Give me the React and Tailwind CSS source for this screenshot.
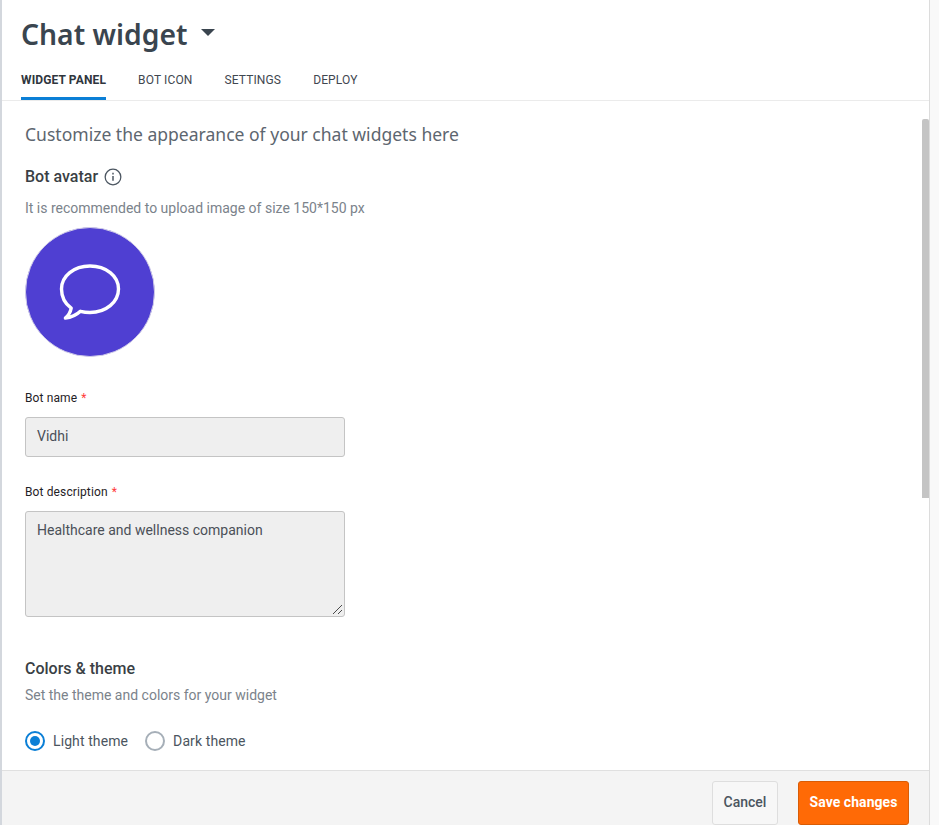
import React from "react";

const roboto = "font-['Roboto',sans-serif]";

function Label({ children }) {
  return (
    <div className="flex h-4 items-center text-[12px] font-normal leading-4 tracking-[0.12px] text-[#1f2226]">
      {children}
      <span className="ml-1 text-[#ff3b3b]">*</span>
    </div>
  );
}

function Radio({ checked, label }) {
  return (
    <div className="flex items-center">
      <span className={"flex h-5 w-5 items-center justify-center rounded-full border-2 bg-white " + (checked ? "border-[#0b7fd6]" : "border-[#a6afb8]")}>
        {checked && <span className="h-2.5 w-2.5 rounded-full bg-[#0b7fd6]" />}
      </span>
      <span className="ml-2 text-[14px] leading-5 tracking-[0.1px] text-[#4b5560]">{label}</span>
    </div>
  );
}

export default function App() {
  return (
    <div className={"relative flex h-[825px] w-[939px] overflow-hidden bg-[#f9f9f9] " + roboto}>
      <div className="flex h-full w-[930px] flex-col border-l-2 border-r border-l-[#d3d7dd] border-r-[#dcdcdc] bg-white">
        <header className="h-[101px] shrink-0 border-b border-[#ebebeb] pl-[19px]">
          <div className="flex h-[69px] items-center pb-[2px]">
            <h1 className="font-['Noto_Sans',sans-serif] text-[28.3px] font-semibold leading-10 text-[#3a454f]">Chat widget</h1>
            <svg className="ml-[14px] mt-[-3px]" width="14" height="7" viewBox="0 0 14 7"><path d="M0 0h14L7 7z" fill="#3a454f" /></svg>
          </div>
          <nav className="flex h-[31px] gap-8 text-[12px] leading-5 tracking-[0.13px] text-[#3f4750]">
            <div className="h-[31px] border-b-[3px] border-[#0b7fd6] pt-[1px] font-bold text-[#2f363d]">WIDGET PANEL</div>
            <div className="pt-[1px]">BOT ICON</div>
            <div className="pt-[1px]">SETTINGS</div>
            <div className="pt-[1px]">DEPLOY</div>
          </nav>
        </header>

        <main className="min-h-0 flex-1 overflow-hidden pl-[23px]">
          <h2 className="mt-[19px] font-['Noto_Sans',sans-serif] text-[17.55px] leading-[28px] text-[#5d666f]">Customize the appearance of your chat widgets here</h2>
          <div className="mt-[19px] flex h-5 items-center">
            <span className="text-[16px] font-medium leading-5 text-[#3a3f45]">Bot avatar</span>
            <svg className="ml-[6px]" width="18" height="18" viewBox="0 0 17 17" fill="none" stroke="#4b5560" strokeWidth="1.2">
              <circle cx="8.5" cy="8.5" r="7.4" />
              <path d="M8.5 7.5v4.5" strokeWidth="1.4" />
              <path d="M8.5 4.6v1.5" strokeWidth="1.4" />
            </svg>
          </div>
          <p className="mt-[11px] text-[14px] leading-5 text-[#7b838b]">It is recommended to upload image of size 150*150 px</p>
          <div className="mt-[9px] flex h-[130px] w-[130px] items-center justify-center rounded-full border border-[#cfcbe8] bg-[#4f3fd2]">
            <svg width="64" height="58" viewBox="0 0 64 58" fill="none">
              <path d="M32 3C48 3 60.5 13 60.5 26S48 49.5 32 49.5c-3.6 0-6.8-.5-9.6-1.2-3.6 3.4-9 6.2-15 6.7 3-2.6 5-5.6 5.8-9.8C7.5 41 3.5 34 3.5 26 3.5 13 16 3 32 3Z" stroke="#fff" strokeWidth="3.4" strokeLinejoin="round" />
            </svg>
          </div>

          <div className="mt-[33px]"><Label>Bot name</Label></div>
          <div className="mt-[11px] flex h-10 w-80 items-center rounded-[3px] border border-[#c4c4c4] bg-[#efefef] px-[11px] pb-[2px] text-[14px] text-[#4b5058]">Vidhi</div>

          <div className="mt-[27px]"><Label>Bot description</Label></div>
          <div className="relative mt-[11px] h-[106px] w-80 rounded-[3px] border border-[#c4c4c4] bg-[#efefef] px-[11px] pt-2 text-[14px] leading-5 text-[#4b5058]">
            Healthcare and wellness companion
            <svg className="absolute bottom-[1px] right-[1px]" width="12" height="12" viewBox="0 0 12 12" stroke="#4a4a4a" strokeWidth="1" fill="none">
              <path d="M2 11 11 2" />
              <path d="M7 11l4-4" />
            </svg>
          </div>

          <h3 className="mt-[42px] text-[16px] font-medium leading-5 text-[#3a3f45]">Colors &amp; theme</h3>
          <p className="mt-[6px] text-[14px] leading-5 text-[#7b838b]">Set the theme and colors for your widget</p>
          <div className="mt-[26px] flex gap-[17px]">
            <Radio checked label="Light theme" />
            <Radio label="Dark theme" />
          </div>
        </main>

        <footer className="flex h-[55px] shrink-0 items-start justify-end gap-5 border-t border-[#e0e0e0] bg-[#f4f4f4] pr-5 pt-[10px]">
          <button className="h-11 w-[66px] rounded-[3px] border border-[#dedede] bg-[#f7f7f7] pb-[2px] text-[14px] font-medium text-[#4b5560]">Cancel</button>
          <button className="h-11 w-[111px] rounded-[3px] border border-[#d95c05] bg-[#ff6a06] pb-[2px] text-[14px] font-bold tracking-[0.05px] text-white">Save changes</button>
        </footer>
      </div>
      <div className="absolute left-[922px] top-[119px] h-[379px] w-[7px] rounded-t-[2px] bg-[#c4c4c4]" />
    </div>
  );
}
